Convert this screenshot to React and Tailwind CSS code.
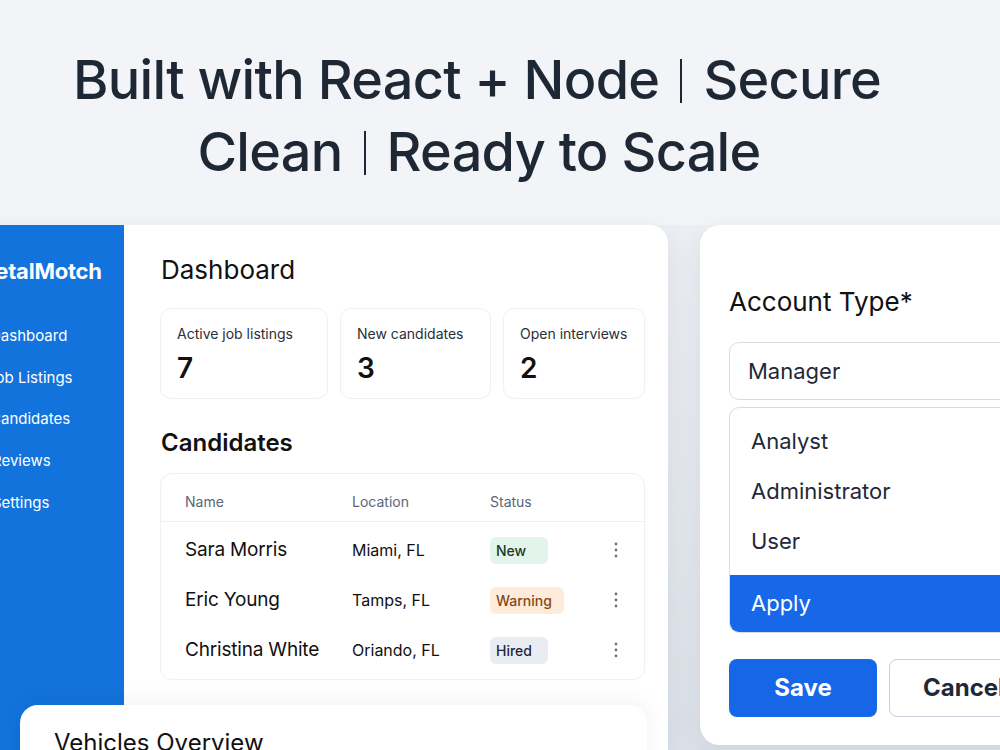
import React from "react";

function Kebab() {
  return (
    <svg width="4" height="16" viewBox="0 0 4 16" className="text-[#6b7280]">
      <circle cx="2" cy="2" r="1.4" fill="currentColor" />
      <circle cx="2" cy="8" r="1.4" fill="currentColor" />
      <circle cx="2" cy="14" r="1.4" fill="currentColor" />
    </svg>
  );
}

function Sep() {
  return <span className="inline-block w-[2px] h-[44px] bg-[#1e2835] align-middle mx-[21px] relative top-[-3px]" />;
}

function Stat({ label, value, w }) {
  return (
    <div className={`${w} rounded-[11px] border border-[#eef0f4] pl-[16px] pt-[15px] pb-[12px] bg-white`}>
      <div className="text-[14px] leading-[20px] text-[#2b2f36]">{label}</div>
      <div className="mt-[6px] text-[28px] leading-[36px] font-semibold text-[#111]">{value}</div>
    </div>
  );
}

const rows = [
  { name: "Sara Morris", loc: "Miami, FL", status: "New", cls: "bg-[#e3f4eb] text-[#173a29] w-[58px]" },
  { name: "Eric Young", loc: "Tamps, FL", status: "Warning", cls: "bg-[#fdecd9] text-[#87471a] w-[74px]" },
  { name: "Christina White", loc: "Oriando, FL", status: "Hired", cls: "bg-[#e9edf3] text-[#1f2937] w-[58px]" },
];

export default function App() {
  return (
    <div className="relative w-[1000px] h-[750px] overflow-hidden bg-[#f2f4f7] font-[Inter,sans-serif]">
      {/* Headline */}
      <div className="h-[225px] flex flex-col items-center pt-[44px] pr-[42px] text-[54px] leading-[72px] font-medium tracking-[-0.013em] text-[#1e2835]">
        <div className="whitespace-nowrap pr-[4px]">
          Built with React + Node<Sep />Secure
        </div>
        <div className="whitespace-nowrap">
          Clean<Sep />Ready to Scale
        </div>
      </div>

      {/* Cards row */}
      <div className="flex h-[525px] bg-gradient-to-b from-[#eceff3] to-[#dde2e9]">
        {/* Main card */}
        <div className="ml-[-26px] w-[694px] shrink-0 flex bg-white rounded-tr-[18px] overflow-hidden shadow-[0_8px_30px_rgba(30,41,59,0.08)]">
          <div className="w-[150px] shrink-0 bg-[#1273dc] text-white">
            <div className="pt-[31px] pl-[1px] text-[22px] leading-[30px] font-bold tracking-[-0.01em]">MetalMotch</div>
            <div className="mt-[40px] pl-[15px] flex flex-col text-[15px] leading-[20px]">
              <div className="h-[42px] ml-[1px]">Dashboard</div>
              <div className="h-[41px] ml-[-2px]">Job Listings</div>
              <div className="h-[42px] ml-[1px]">Candidates</div>
              <div className="h-[42px] ml-[3px]">Reviews</div>
              <div className="h-[42px] ml-[3px]">Settings</div>
            </div>
          </div>
          <div className="flex-1 pl-[36px] pt-[29px]">
            <div className="text-[26px] leading-[32px] text-[#111] pl-[1px]">Dashboard</div>
            <div className="mt-[22px] flex gap-[12px]">
              <Stat label="Active job listings" value="7" w="w-[168px]" />
              <Stat label="New candidates" value="3" w="w-[151px]" />
              <Stat label="Open interviews" value="2" w="w-[142px]" />
            </div>
            <div className="mt-[28px] text-[24px] leading-[32px] font-semibold text-[#111] pl-[1px]">Candidates</div>
            <div className="mt-[14px] w-[485px] rounded-[12px] border border-[#eef0f4] bg-white pb-[4px]">
              <div className="h-[48px] pt-[7px] grid grid-cols-[167px_138px_110px_1fr] items-center pl-[24px] border-b border-[#eef0f4] text-[14px] text-[#5b6679]">
                <div>Name</div>
                <div>Location</div>
                <div>Status</div>
                <div />
              </div>
              <div className="pt-[3px]">
                {rows.map((r) => (
                  <div key={r.name} className="h-[50px] grid grid-cols-[167px_138px_110px_1fr] items-center pl-[24px]">
                    <div className="text-[19px] text-[#111] tracking-[-0.01em] whitespace-nowrap">{r.name}</div>
                    <div className="text-[16px] text-[#111]">{r.loc}</div>
                    <div>
                      <span className={`inline-flex items-center h-[27px] rounded-[6px] pl-[6px] text-[14px] font-medium ${r.cls}`}>{r.status}</span>
                    </div>
                    <div className="pl-[14px] flex items-center"><Kebab /></div>
                  </div>
                ))}
              </div>
            </div>
          </div>
        </div>

        {/* Right card */}
        <div className="ml-[32px] w-[340px] shrink-0 h-[520px] bg-white rounded-l-[20px] pl-[29px] pt-[61px] shadow-[0_8px_30px_rgba(30,41,59,0.08)]">
          <div className="text-[26px] leading-[32px] text-[#111]">Account Type*</div>
          <div className="mt-[24px] h-[58px] w-[330px] rounded-l-[10px] border border-[#d6dce4] flex items-center pl-[18px] text-[22px] text-[#1f2937]">Manager</div>
          <div className="mt-[7px] w-[330px] rounded-l-[10px] border border-[#d6dce4] pt-[8px] overflow-hidden text-[22px] text-[#1f2937]">
            <div className="h-[50px] flex items-center pl-[21px]">Analyst</div>
            <div className="h-[50px] flex items-center pl-[21px]">Administrator</div>
            <div className="h-[50px] flex items-center pl-[21px]">User</div>
            <div className="mt-[9px] h-[57px] flex items-center pl-[21px] bg-[#1668e8] text-white">Apply</div>
          </div>
          <div className="mt-[26px] flex gap-[12px]">
            <div className="w-[148px] h-[58px] rounded-[8px] bg-[#1667e8] text-white text-[24px] font-bold flex items-center justify-center">Save</div>
            <div className="w-[150px] h-[58px] rounded-[8px] border border-[#c9d0da] text-[#1f2937] text-[24px] font-bold flex items-center pl-[33px]">Cancel</div>
          </div>
        </div>
      </div>

      {/* Vehicles overview card */}
      <div className="absolute left-[20px] top-[705px] w-[627px] h-[80px] bg-white rounded-[18px] pl-[34px] pt-[22px] shadow-[0_-4px_24px_rgba(30,41,59,0.06)]">
        <div className="text-[24px] leading-[32px] text-[#111]">Vehicles Overview</div>
      </div>
    </div>
  );
}
